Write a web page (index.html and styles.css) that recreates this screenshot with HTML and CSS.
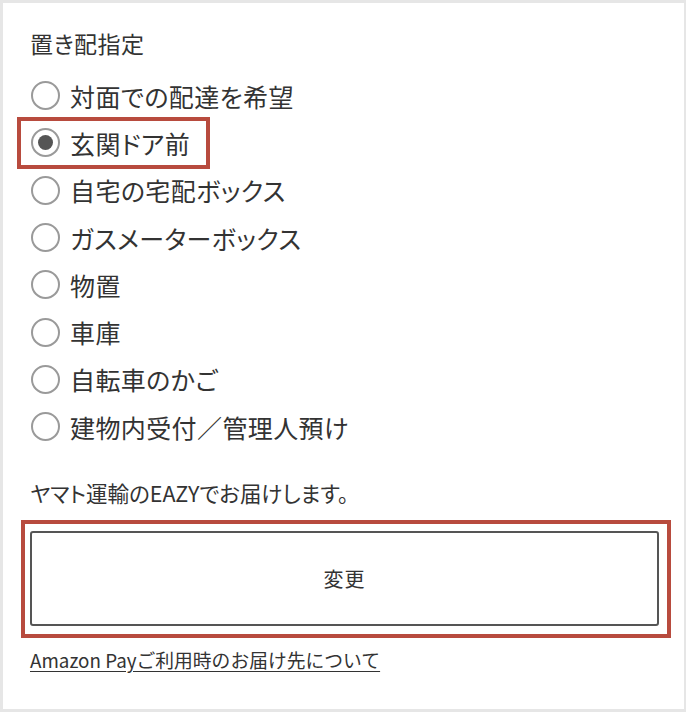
FILE: index.html
```html
<!DOCTYPE html>
<html lang="ja">
<head>
<meta charset="utf-8">
<link rel="stylesheet" href="styles.css">
</head>
<body>
<div class="frame">
  <div class="content">
    <h2 class="title">置き配指定</h2>
    <ul class="options">
      <li class="option"><span class="radio"></span><span class="label">対面での配達を希望</span></li>
      <li class="option is-selected"><span class="radio checked"></span><span class="label">玄関ドア前</span></li>
      <li class="option"><span class="radio"></span><span class="label">自宅の宅配ボックス</span></li>
      <li class="option"><span class="radio"></span><span class="label">ガスメーターボックス</span></li>
      <li class="option"><span class="radio"></span><span class="label">物置</span></li>
      <li class="option"><span class="radio"></span><span class="label">車庫</span></li>
      <li class="option"><span class="radio"></span><span class="label">自転車のかご</span></li>
      <li class="option"><span class="radio"></span><span class="label">建物内受付／管理人預け</span></li>
    </ul>
    <p class="note">ヤマト運輸のEAZYでお届けします。</p>
    <div class="highlight">
      <button class="change-btn" type="button">変更</button>
    </div>
    <a class="link" href="#">Amazon Payご利用時のお届け先について</a>
  </div>
</div>
</body>
</html>
```
FILE: styles.css
```css
* { box-sizing: border-box; }
html, body { margin: 0; padding: 0; background: #fff; }
body {
  font-family: "Noto Sans CJK JP", "Noto Sans", sans-serif;
  color: #333;
}
.frame {
  width: 686px;
  height: 712px;
  border-style: solid;
  border-color: #e6e6e6;
  border-width: 3px 2px 3px 3px;
  background: #fff;
}
.content {
  padding: 24px 25px 0 27px;
  display: flex;
  flex-direction: column;
  align-items: flex-start;
}
.title {
  margin: 0;
  font-size: 23px;
  font-weight: normal;
  line-height: 32px;
  font-feature-settings: "palt";
  letter-spacing: 0.5px;
}
.options {
  list-style: none;
  margin: 13px 0 0 1px;
  padding: 0;
}
.option {
  display: flex;
  align-items: center;
  height: 47.3px;
  width: fit-content;
  position: relative;
}
.option.is-selected::before {
  content: "";
  position: absolute;
  top: -2px;
  bottom: -2px;
  left: -14px;
  right: -20px;
  border: 4px solid #b84b3e;
}
.radio {
  width: 29px;
  height: 29px;
  border-radius: 50%;
  border: 2px solid #9a9a9a;
  margin-right: 10px;
  flex: none;
  display: flex;
  align-items: center;
  justify-content: center;
}
.radio.checked::after {
  content: "";
  width: 15px;
  height: 15px;
  border-radius: 50%;
  background: #555;
}
.label {
  font-size: 25px;
  line-height: 30px;
  font-feature-settings: "palt";
  letter-spacing: 0.4px;
}
.note {
  margin: 28px 0 0 0;
  font-size: 21.5px;
  line-height: 30px;
  font-feature-settings: "palt";
}
.highlight {
  margin: 12px 0 0 -9px;
  width: 650px;
  border: 4px solid #b84b3e;
  padding: 7px 8px 8px 5px;
}
.change-btn {
  display: block;
  width: 100%;
  height: 95px;
  background: #fff;
  border: 2px solid #555;
  border-radius: 3px;
  font-family: "Noto Sans CJK JP", sans-serif;
  font-size: 20px;
  color: #333;
  letter-spacing: 1px;
}
.link {
  margin-top: 10px;
  font-size: 18.8px;
  line-height: 24px;
  color: #333;
  text-decoration: underline;
  text-underline-offset: 3px;
}
```
